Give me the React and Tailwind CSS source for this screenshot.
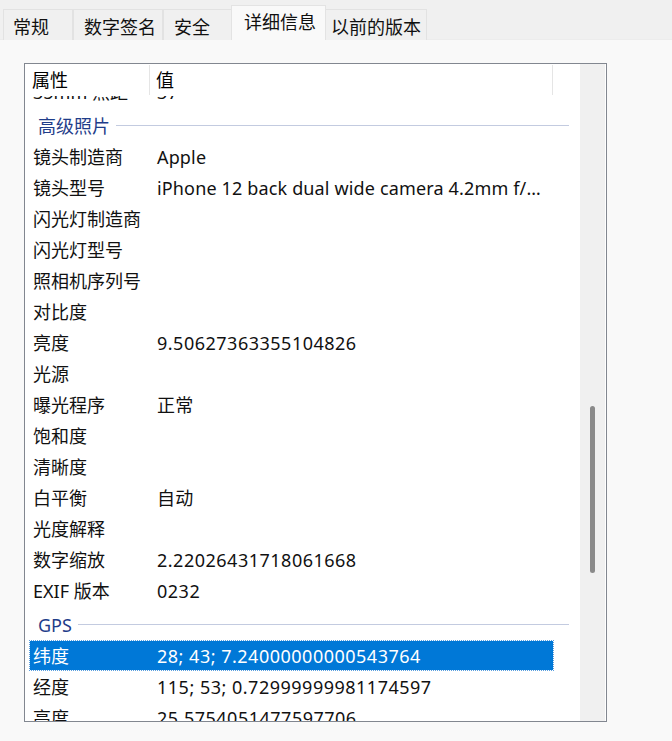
import React from 'react'

const tabs = [
  { label: '常规', w: 'w-[70px]', pl: 'pl-[9px]' },
  { label: '数字签名', w: 'w-[90px]', pl: 'pl-[10px]' },
  { label: '安全', w: 'w-[70px]', pl: 'pl-[10px]' },
  { label: '详细信息', w: 'w-[95px]', pl: 'pl-[12px]', active: true },
  { label: '以前的版本', w: 'w-[103px]', pl: 'pl-[6px]' },
]

// rows after the partially scrolled-away "35mm 焦距" line
const rows = [
  { group: '高级照片' },
  { k: '镜头制造商', v: 'Apple' },
  { k: '镜头型号', v: 'iPhone 12 back dual wide camera 4.2mm f/…' },
  { k: '闪光灯制造商', v: '' },
  { k: '闪光灯型号', v: '' },
  { k: '照相机序列号', v: '' },
  { k: '对比度', v: '' },
  { k: '亮度', v: '9.50627363355104826' },
  { k: '光源', v: '' },
  { k: '曝光程序', v: '正常' },
  { k: '饱和度', v: '' },
  { k: '清晰度', v: '' },
  { k: '白平衡', v: '自动' },
  { k: '光度解释', v: '' },
  { k: '数字缩放', v: '2.22026431718061668' },
  { k: 'EXIF 版本', v: '0232' },
  { group: 'GPS' },
  { k: '纬度', v: '28; 43; 7.24000000000543764', selected: true },
  { k: '经度', v: '115; 53; 0.72999999981174597' },
  { k: '高度', v: '25.5754051477597706' },
]

const numeric = (v) => /^[\d.; ]+$/.test(v)

function Row({ k, v, selected }) {
  return (
    <div className="h-[31px] flex items-center pl-[5px]">
      <div
        className={
          'w-[523px] h-[29px] flex items-center ' +
          (selected ? 'bg-[#0078d7] text-white outline outline-1 outline-dotted outline-[#5aa0e0]' : 'text-[#111]')
        }
      >
        <div className="w-[127px] pl-[3px] whitespace-nowrap">{k}</div>
        <div className={'flex-1 whitespace-nowrap ' + (numeric(v) ? 'tracking-[0.5px]' : 'tracking-[0.15px]')}>{v}</div>
      </div>
    </div>
  )
}

function Group({ title }) {
  return (
    <div className="h-[34px] pt-[3px] flex items-center pl-[13px] pr-[11px]">
      <span className="text-[#1f3d8a] whitespace-nowrap">{title}</span>
      <div className="flex-1 h-px bg-[#c3cbe0] ml-[6px]" />
    </div>
  )
}

export default function App() {
  return (
    <div
      className="w-[672px] h-[741px] bg-[#f9f9f9] overflow-hidden text-[18px] leading-[20px]"
      style={{ fontFamily: '"Noto Sans", "Noto Sans CJK SC", sans-serif' }}
    >
      {/* tab strip */}
      <div className="h-[40px] bg-[#f0f0f0] flex items-end pl-[3px] border-b border-[#ececec]">
        {tabs.map((t) =>
          t.active ? (
            <div
              key={t.label}
              className={'h-[35px] -mx-[2px] -mb-px z-10 bg-[#f9f9f9] border border-b-0 border-[#e3e3e3] pt-[6px] whitespace-nowrap text-[#111] ' + t.w + ' ' + t.pl}
            >
              {t.label}
            </div>
          ) : (
            <div
              key={t.label}
              className={'h-[31px] -mb-px bg-[#f0f0f0] border border-b-0 border-[#e2e2e2] pt-[7px] whitespace-nowrap text-[#111] ' + t.w + ' ' + t.pl}
            >
              {t.label}
            </div>
          )
        )}
      </div>

      {/* details list */}
      <div className="pl-[24px] pt-[23px]">
        <div className="w-[583px] h-[659px] border border-[#828790] bg-white flex">
          <div className="flex-1 flex flex-col overflow-hidden">
            <div className="h-[32px] shrink-0 flex items-center bg-white z-10 relative">
              <div className="w-[125px] h-[30px] pl-[7px] flex items-center border-r border-[#e5e5e5]">属性</div>
              <div className="w-[403px] h-[30px] pl-[6px] flex items-center border-r border-[#e5e5e5]">值</div>
            </div>
            <div className="flex-1 overflow-hidden">
              <div className="-mt-[20px]">
                <Row k="35mm 焦距" v="37" />
                {rows.map((r, i) =>
                  r.group ? <Group key={i} title={r.group} /> : <Row key={i} {...r} />
                )}
              </div>
            </div>
          </div>
          {/* scrollbar */}
          <div className="w-[25px] bg-[#f0f0f0] pt-[342px] mr-px">
            <div className="ml-[10px] w-[5px] h-[167px] rounded-full bg-[#8a8a8a]" />
          </div>
        </div>
      </div>
    </div>
  )
}
